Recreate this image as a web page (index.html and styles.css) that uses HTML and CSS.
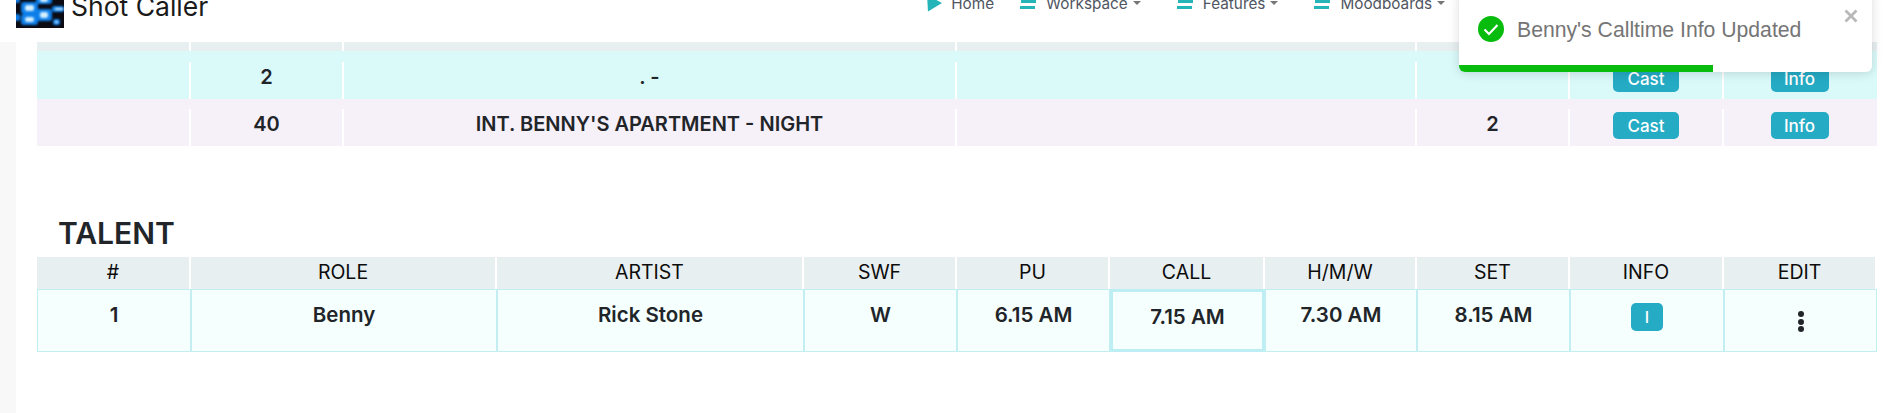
FILE: index.html
```html
<!DOCTYPE html>
<html lang="en">

<head>
    <meta charset="UTF-8">
    <meta name="viewport" content="width=device-width, initial-scale=1.0">
    <title>Shot Caller</title>
    <link rel="stylesheet" href="styles.css">
</head>

<body>
    <header class="topbar">
        <svg class="logo" viewBox="0 0 48 28">
            <defs>
                <filter id="glow"><feGaussianBlur stdDeviation="1.300"></feGaussianBlur></filter>
                <filter id="soft"><feGaussianBlur stdDeviation="0.800"></feGaussianBlur></filter>
            </defs>
            <rect width="48" height="28" fill="#0c0a12"></rect>
            <g fill="#0f7fea" filter="url(#glow)">
                <rect x="5" y="2" width="17" height="12" rx="3"></rect>
                <rect x="5" y="14" width="17" height="11" rx="3"></rect>
                <rect x="20" y="9" width="16" height="12" rx="3"></rect>
                <rect x="20" y="-4" width="16" height="8" rx="3"></rect>
                <rect x="36" y="6" width="12" height="6" rx="2"></rect>
                <rect x="37" y="19" width="7" height="6" rx="2"></rect>
                <rect x="-2" y="14" width="6" height="7" rx="2"></rect>
                <rect x="-2" y="-2" width="6" height="5" rx="2"></rect>
            </g>
            <g fill="#d4f0ff" filter="url(#soft)">
                <rect x="9" y="5" width="9" height="6" rx="2"></rect>
                <rect x="9" y="17" width="9" height="5" rx="2"></rect>
                <rect x="24" y="12" width="8" height="6" rx="2"></rect>
                <rect x="24" y="-3" width="8" height="5" rx="2"></rect>
                <rect x="39" y="8" width="8" height="2"></rect>
                <rect x="39" y="21" width="3" height="2"></rect>
            </g>
        </svg>
        <span class="brand">Shot Caller</span>
        <nav class="nav">
            <a class="nav-item nav-home">
                <svg class="icon-play" viewBox="0 0 15 24"><path d="M0-2 15 6 1 14.500Z"></path></svg>
                Home
            </a>
            <a class="nav-item">
                <svg class="icon-bars" viewBox="0 0 16 12"><rect x="1" y="0" width="15" height="3"></rect><rect y="6" width="15" height="3"></rect></svg>
                Workspace<i class="caret"></i>
            </a>
            <a class="nav-item">
                <svg class="icon-bars" viewBox="0 0 16 12"><rect x="1" y="0" width="15" height="3"></rect><rect y="6" width="15" height="3"></rect></svg>
                Features<i class="caret"></i>
            </a>
            <a class="nav-item">
                <svg class="icon-bars" viewBox="0 0 16 12"><rect x="1" y="0" width="15" height="3"></rect><rect y="6" width="15" height="3"></rect></svg>
                Moodboards<i class="caret"></i>
            </a>
        </nav>
    </header>

    <div class="page">
        <aside class="sidebar"></aside>
        <main class="content">
            <div class="scenes">
                <div class="scene-row scene-head">
                    <div></div><div></div><div></div><div></div><div></div><div></div><div></div>
                </div>
                <div class="scene-row scene-cyan">
                    <div></div>
                    <div>2</div>
                    <div>. -</div>
                    <div></div>
                    <div></div>
                    <div class="cell-btn"><button class="btn btn-cast">Cast</button></div>
                    <div class="cell-btn"><button class="btn btn-info">Info</button></div>
                </div>
                <div class="scene-row scene-pink">
                    <div></div>
                    <div>40</div>
                    <div>INT. BENNY'S APARTMENT - NIGHT</div>
                    <div></div>
                    <div>2</div>
                    <div class="cell-btn"><button class="btn btn-cast">Cast</button></div>
                    <div class="cell-btn"><button class="btn btn-info">Info</button></div>
                </div>
            </div>

            <h2 class="section-title">TALENT</h2>
            <div class="talent">
                <div class="talent-row talent-head">
                    <div>#</div>
                    <div>ROLE</div>
                    <div>ARTIST</div>
                    <div>SWF</div>
                    <div>PU</div>
                    <div>CALL</div>
                    <div>H/M/W</div>
                    <div>SET</div>
                    <div>INFO</div>
                    <div>EDIT</div>
                </div>
                <div class="talent-row talent-body">
                    <div>1</div>
                    <div>Benny</div>
                    <div>Rick Stone</div>
                    <div>W</div>
                    <div>6.15 AM</div>
                    <div class="cell-focus">7.15 AM</div>
                    <div>7.30 AM</div>
                    <div>8.15 AM</div>
                    <div><button class="btn btn-i">I</button></div>
                    <div class="cell-kebab"><span class="kebab"><i></i><i></i><i></i></span></div>
                </div>
            </div>
        </main>
    </div>

    <div class="toast">
        <div class="toast-body">
            <svg class="toast-check" viewBox="0 0 26 26">
                <circle cx="13" cy="13" r="13" fill="#07bc0c"></circle>
                <path d="M6.500 13.500 11 18 19.500 9" fill="none" stroke="#fff" stroke-width="2.200"></path>
            </svg>
            <span class="toast-text">Benny's Calltime Info Updated</span>
        </div>
        <svg class="toast-close" viewBox="0 0 14 14"><path d="M1.500 1.500 12.500 12.500M12.500 1.500 1.500 12.500"></path></svg>
        <div class="toast-progress"></div>
    </div>
</body>

</html>
```

FILE: styles.css
```css
* {
    box-sizing: border-box;
}

body {
    margin: 0;
    min-height: 100vh;
    display: flex;
    flex-direction: column;
    background: #fff;
    color: #212529;
    font-family: Inter, sans-serif;
    overflow: hidden;
}

/* top bar, scrolled so its top is cut off */
.topbar {
    height: 42px;
    flex: none;
    display: flex;
    align-items: flex-end;
    padding: 0 0 14px 16px;
    overflow: hidden;
    background: #fff;
}

.logo {
    width: 48px;
    height: 28px;
    flex: none;
}

.brand {
    margin: 0 0 8px 7px;
    font-size: 26.500px;
    line-height: 28px;
    color: #1a1a1a;
}

.nav {
    display: flex;
    margin: 0 0 7px 719px;
    gap: 26px;
    font-size: 15.300px;
    line-height: 18px;
    color: #4f5561;
}

.nav-item {
    display: flex;
    align-items: center;
    gap: 10px;
    padding-right: 10px;
    white-space: nowrap;
}

.nav-home {
    gap: 9px;
    padding-right: 0;
}

.icon-play {
    width: 15px;
    height: 24px;
    margin-top: 10px;
    fill: #25b5b8;
}

.icon-bars {
    width: 16px;
    height: 12px;
    margin-top: 4px;
    fill: #25b5b8;
}

.caret {
    width: 0;
    height: 0;
    margin: 0 0 3px -5px;
    border-top: 4px solid #777;
    border-left: 4px solid transparent;
    border-right: 4px solid transparent;
}

.page {
    flex: 1;
    display: flex;
}

.sidebar {
    width: 16px;
    flex: none;
    background: #f8f8f8;
}

.content {
    flex: 1;
    padding: 0 21px 0 21px;
}

/* scene table */
.scene-row {
    display: grid;
    grid-template-columns: 154px 153px 613px 460px 153px 154px 153px;
    font-size: 20px;
    font-weight: 600;
    text-align: center;
}

.scene-row > div {
    display: flex;
    align-items: center;
    justify-content: center;
    padding-bottom: 7px;
    border-right: 2px solid #fff;
}

.scene-row > .cell-btn {
    padding-bottom: 4px;
}

.scene-row > .cell-btn:last-child {
    padding-right: 2px;
    border-right: none;
}

.scene-head > div:last-child {
    border-right: none;
}

.scene-head {
    height: 9px;
    background: #e8eff1;
}

.scene-cyan {
    height: 48px;
    padding-top: 11px;
    background: #daf9f9;
}

.scene-pink {
    height: 47px;
    padding-top: 10px;
    background: #f6f0f9;
}

.btn {
    border: none;
    border-radius: 5px;
    background: #25abc4;
    color: #fff;
    font-family: Inter, sans-serif;
    font-size: 17px;
    font-weight: 500;
    padding: 0;
}

.btn-cast {
    width: 66px;
    height: 27px;
}

.btn-info {
    width: 58px;
    height: 27px;
}

.btn-i {
    width: 32px;
    height: 28px;
    font-size: 16px;
}

/* talent table */
.section-title {
    margin: 72px 0 9px 21px;
    font-size: 30px;
    line-height: 30px;
    font-weight: 600;
    color: #212529;
}

.talent-row {
    display: grid;
    grid-template-columns: 154px 306px 307px 153px 153px 155px 152px 153px 154px 153px;
    text-align: center;
}

.talent-head {
    height: 32px;
    font-size: 19.500px;
    line-height: 30px;
    background: #e8eff1;
    color: #0c0c0c;
    margin-right: 2px;
    grid-template-columns: 154px 306px 307px 153px 153px 155px 152px 153px 154px 151px;
}

.talent-head > div {
    border-right: 2px solid #fff;
}

.talent-head > div:last-child {
    border-right: none;
}

.talent-body {
    height: 63px;
    font-size: 20.500px;
    font-weight: 600;
    background: #f5fffd;
}

.talent-body > div {
    padding-top: 13px;
    line-height: 24px;
    border: 1px solid #c3eff3;
}

.talent-body .cell-focus {
    padding-top: 13px;
    border: 3px solid #bdeef4;
}

.talent-body .btn-i {
    display: block;
    margin: 0 auto;
}

.talent-body .cell-kebab {
    display: flex;
    justify-content: center;
    align-items: flex-start;
    padding-top: 21px;
}

.kebab {
    display: flex;
    flex-direction: column;
    gap: 1.500px;
}

.kebab i {
    display: block;
    width: 6px;
    height: 6px;
    border-radius: 50%;
    background: #212529;
}

/* toast */
.toast {
    position: absolute;
    top: -10px;
    left: 1459px;
    width: 413px;
    height: 82px;
    border-radius: 6px;
    overflow: hidden;
    background: #fff;
    box-shadow: 0 1px 10px rgba(0, 0, 0, 0.1), 0 2px 15px rgba(0, 0, 0, 0.05);
    color: #757575;
    font-family: "Liberation Sans", Arial, sans-serif;
    font-size: 21.200px;
}

.toast-body {
    display: flex;
    align-items: center;
    gap: 13px;
    padding: 26px 0 0 19px;
}

.toast-text {
    padding-top: 2px;
}

.toast-check {
    width: 26px;
    height: 26px;
    flex: none;
}

.toast-close {
    position: absolute;
    top: 19px;
    right: 14px;
    width: 14px;
    height: 14px;
    fill: none;
    stroke: #b8b8b8;
    stroke-width: 2.800;
}

.toast-progress {
    position: absolute;
    left: 0;
    bottom: 0;
    width: 254px;
    height: 7px;
    background: #07bc0c;
}
```
